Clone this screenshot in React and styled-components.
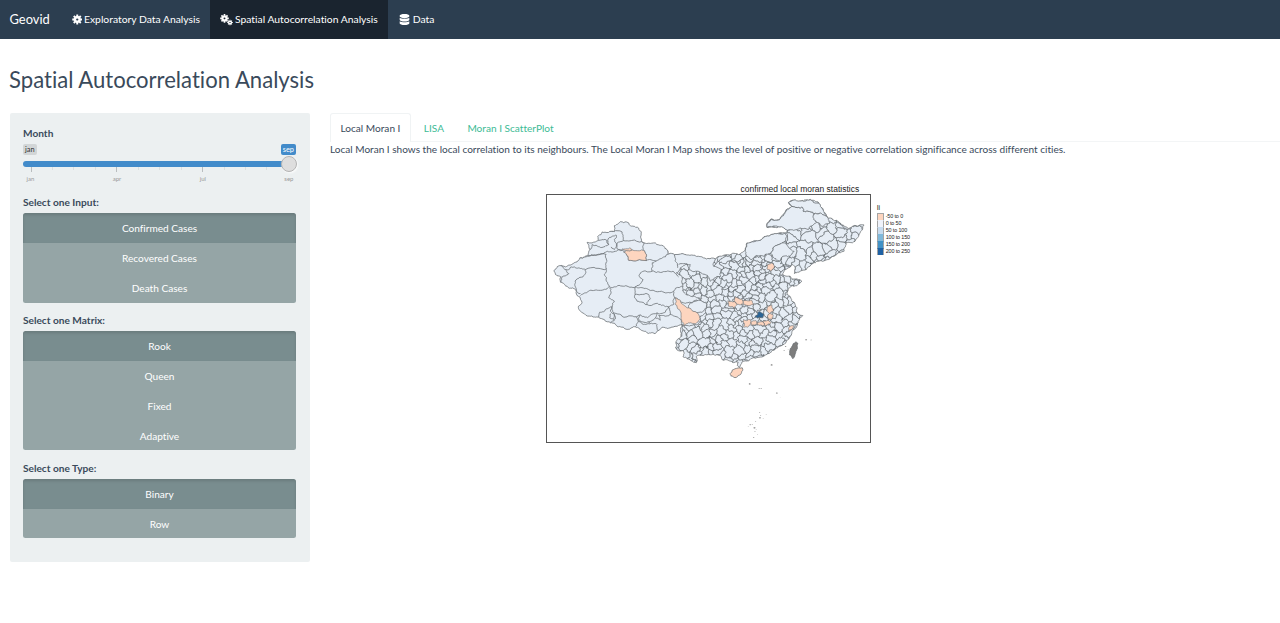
import React from "react";
import styled, { createGlobalStyle, css } from "styled-components";
import { FaDatabase } from "react-icons/fa";

const GlobalStyle = createGlobalStyle`
  * { box-sizing: border-box; }
  body {
    margin: 0;
    background: #fff;
    color: #3a4a5b;
    font-family: Lato, "Liberation Sans", sans-serif;
    font-size: 10px;
    font-variant-ligatures: none;
    line-height: 14.2px;
  }
`;

/* ---------- page chrome ---------- */

const Navbar = styled.nav`
  display: flex;
  height: 39px;
  padding-left: 9.5px;
  background: #2c3e50;
  color: #fff;
`;
const Brand = styled.div`
  width: 52px;
  font-size: 12.9px;
  line-height: 38px;
`;
const NavLink = styled.div`
  display: flex;
  align-items: center;
  gap: ${(p) => p.$gap || 2}px;
  padding: 0 ${(p) => p.$pad || 10}px;
  font-size: 10.35px;
  white-space: nowrap;
  background: ${(p) => (p.$active ? "#1a242f" : "transparent")};
`;
const Title = styled.h2`
  margin: 28px 0 0 9px;
  font-size: 22.1px;
  font-weight: 400;
  line-height: 26px;
  color: #3a4a5b;
`;
const Columns = styled.main`
  display: flex;
  align-items: flex-start;
  gap: 20px;
  padding: 20px 0 0 9.5px;
`;
const Sidebar = styled.aside`
  width: 300px;
  height: 449px;
  padding: 14px 13.5px;
  background: #ecf0f1;
  border-radius: 2px;
`;
const Label = styled.div`
  height: 17px;
  font-weight: 700;
  font-size: 10.15px;
  line-height: 13px;
`;

/* ---------- month slider ---------- */

const Slider = styled.div`
  height: 52px;
`;
const Flags = styled.div`
  display: flex;
  justify-content: space-between;
  height: 17px;
`;
const Flag = styled.span`
  height: 11px;
  padding: 0 2px;
  border-radius: 2px;
  font-size: 7.4px;
  line-height: 11px;
  color: ${(p) => (p.$current ? "#fff" : "#333")};
  background: ${(p) => (p.$current ? "#428bca" : "#d2d6d7")};
`;
const Track = styled.div`
  position: relative;
  height: 5.5px;
  border-radius: 3px;
  background: #428bca;
`;
const Handle = styled.div`
  position: absolute;
  right: -1px;
  top: -5px;
  width: 16px;
  height: 16px;
  border: 1px solid #b4b4b4;
  border-radius: 50%;
  background: #dedede;
  box-shadow: 1px 1px 2px rgba(255, 255, 255, 0.8);
`;
const Ticks = styled.div`
  display: flex;
  justify-content: space-between;
  margin: 0 7px 0 7.5px;
`;
const Tick = styled.div`
  width: 1px;
  height: ${(p) => (p.$major ? 5.5 : 3)}px;
  background: ${(p) => (p.$major ? "#b9bdbf" : "#dbdfe0")};
`;
const TickLabels = styled.div`
  display: flex;
  justify-content: space-between;
  margin: 3px 2.5px 0 3.5px;
  font-size: 6px;
  line-height: 8px;
  color: #999;
`;

/* ---------- button groups ---------- */

const Group = styled.div`
  margin-bottom: 11.2px;
  border-radius: 2.5px;
  overflow: hidden;
`;
const Choice = styled.div`
  height: 29.9px;
  color: #fff;
  text-align: center;
  font-size: 10.1px;
  line-height: 30px;
  background: #95a5a6;
  ${(p) =>
    p.$active &&
    css`
      background: #798d8f;
      box-shadow: inset 0 2px 3px rgba(0, 0, 0, 0.125);
    `}
`;

/* ---------- main panel ---------- */

const Panel = styled.section`
  flex: 1;
`;
const Tabs = styled.div`
  display: flex;
  height: 29px;
  border-bottom: 1px solid #f3f5f6;
`;
const Tab = styled.div`
  height: 29px;
  margin-right: 1.4px;
  padding: 0 10px;
  font-size: 10.1px;
  line-height: 28px;
  border: 1px solid ${(p) => (p.$active ? "#f0f3f4" : "transparent")};
  border-bottom: 0;
  border-radius: 3px 3px 0 0;
  background: ${(p) => (p.$active ? "#fff" : "transparent")};
  color: ${(p) => (p.$active ? "#3a4a5b" : "#3dbb95")};
`;
const Note = styled.p`
  margin: 0 0 0 0.5px;
  font-size: 10.06px;
  line-height: 15px;
`;
const Plot = styled.div`
  display: flex;
  gap: 6px;
  margin: 27px 0 0 216.2px;
  font-family: "Liberation Sans", Arial, sans-serif;
  color: #222;
`;
const PlotTitle = styled.div`
  height: 10.3px;
  padding-right: 11.5px;
  font-size: 8.5px;
  line-height: 11px;
  text-align: right;
`;
const Frame = styled.div`
  width: 325px;
  height: 249px;
  border: 1px solid #555;
`;
const Legend = styled.div`
  padding-top: 19.5px;
  font-size: 5.4px;
  letter-spacing: -0.12px;
  line-height: 7.6px;
`;
const LegendTitle = styled.div`
  height: 9.5px;
  font-size: 7px;
  line-height: 7px;
`;
const LegendRow = styled.div`
  display: flex;
  gap: 1.5px;
  height: 7px;
  white-space: nowrap;
`;
const Swatch = styled.span`
  width: 7.5px;
  border-left: 1px solid #a5a5a5;
  border-right: 1px solid #a5a5a5;
  border-top: 1px solid ${(p) => (p.$first ? "#a5a5a5" : "transparent")};
  background: ${(p) => p.$color};
`;

/* ---------- icons ---------- */

const Gear = ({ x, y, r }) => (
  <g transform={`translate(${x} ${y}) scale(${r / 5})`} stroke="currentColor">
    <circle r="2.4" fill="none" strokeWidth="2.6" />
    {[0, 45, 90, 135].map((a) => (
      <path key={a} d="M-5 0H-3M3 0H5" strokeWidth="1.9" transform={`rotate(${a})`} />
    ))}
  </g>
);
const CogIcon = () => (
  <svg width="10.5" height="11" viewBox="-5.25 -5.5 10.5 11"><Gear x={0} y={0} r={5} /></svg>
);
const CogsIcon = () => (
  <svg width="13" height="12" viewBox="0 0 13 12">
    <Gear x={4.5} y={4.4} r={4.3} />
    <Gear x={10} y={8.5} r={2.8} />
  </svg>
);

/* ---------- map geometry ---------- */

const LAND = "#e6edf5";
const PEACH = "#fdd5bf";
const LINE = "#666b70";

const OUTLINE = [
  [553.5,271.5],[558.7,266],[565,267.3],[575,262.7],[579.3,258.3],[587.3,255.7],[589.3,250],[586.7,242.7],[598.3,240.7],[597.3,236.7],[601.7,232.3],[614,232],[614,226],[620,222],[626,222.3],[630,226],[637.3,227.7],[641,233.3],[641,241.7],[655,243.3],[664,247.3],[668,254.5],[681.7,254],[693.3,255.7],[703.3,258.3],[715,259.3],[723.3,255.7],[738.3,255],[745,250.7],[746.7,243.3],[760,240.7],[765,236.7],[773.3,234.3],[785,233.3],[787.3,230.7],[778.3,227.3],[766.7,227.7],[766.7,224],[770.7,219.3],[779.3,220],[785,212.7],[791.7,206.7],[788.3,202.7],[795,200],[803.3,201.3],[811.7,200.7],[819.3,204],[823.3,210.7],[827.3,217.3],[836.7,220.7],[841.7,225],[850,228.3],[864,225.3],[860,233.3],[855,241.7],[846,242.7],[844,251.7],[835,256],[828.3,260],[816.7,261.7],[808.3,267.3],[800,271.7],[794.3,274],[795,267.3],[792.7,265],[785,270],[781.7,275],[790,276.7],[792,280],[801.7,281.7],[798,285],[792,286],[788,290],[786.7,295],[791.7,301.7],[796.7,308],[797,313],[802.7,316],[798,321.7],[796.7,326.7],[791.7,333],[788,340],[781.7,346],[775,350],[766.7,355],[758,358],[750,360],[741.7,362.7],[739.5,368],[737,366],[738,362.7],[730,361.7],[723,360.7],[720,356],[711.7,355],[703,356],[696,357],[696,363.3],[686.7,359.3],[682.7,357.3],[683.3,351.7],[675,348.3],[676,341.7],[680.7,335],[681.7,325],[670,328.3],[661.7,327.7],[655,334],[648,334],[640,330],[635,327.3],[626.7,330],[618,327.3],[610,323.3],[598,317.7],[590,316.7],[580,311.7],[578,306.7],[581.7,303.3],[579.3,297.3],[575,290],[568,288.3],[560,282.7],[560.7,277.3],[555,275],
];

// Survey sheets: thirds of a map unit, each measured from its own corner.
const sheet = (ox, oy) => (pts) => pts.map(([x, y]) => [ox + x / 3, oy + y / 3]);
const west = sheet(540, 190);
const north = sheet(740, 180);
const south = sheet(660, 270);

const WEST_AREA = west([[0,80],[260,60],[380,100],[384,192],[425,190],[480,193],[526,205],[520,230],[545,240],[540,262],[510,275],[495,255],[470,245],[445,240],[440,222],[420,235],[408,250],[425,260],[428,290],[432,310],[460,320],[480,335],[500,345],[497,370],[480,380],[475,403],[440,408],[425,405],[425,440],[0,440]]);

const WEST_LINES = [
  [[118,205],[142,200],[168,196],[197,194],[200,215],[198,238],[135,240],[115,235],[92,232],[75,240],[60,228]],
  [[135,240],[133,255],[110,268],[103,285],[108,303],[120,312]],
  [[75,240],[85,252],[65,262],[60,278]],
  [[198,238],[192,255],[198,275],[208,292],[185,302],[155,303],[135,310],[120,318]],
  [[148,180],[155,165],[190,172],[205,165],[202,152],[215,140],[228,137],[222,150],[228,170],[222,180],[212,172]],
  [[142,197],[175,196],[195,188],[225,185],[245,182],[258,193],[265,212],[318,213]],
  [[185,127],[245,127],[249,153],[303,156]],
  [[175,152],[200,153],[205,165]],
  [[249,153],[230,160],[230,178],[245,182]],
  [[303,156],[312,162],[308,182]],
  [[312,183],[318,213],[348,214],[375,202],[384,194]],
  [[348,214],[335,220],[335,245],[300,250],[296,258],[308,270],[300,283],[285,292],[250,290],[208,295]],
  [[335,245],[365,248],[398,245],[415,262]],
  [[402,196],[405,215],[412,235]],
  [[285,292],[300,294],[325,300],[375,310],[400,305],[428,290]],
  [[400,305],[403,325],[400,345],[385,352]],
  [[285,292],[284,315],[290,335],[320,345],[360,345],[385,352],[375,368],[350,370],[322,385],[300,376],[288,382],[260,382],[220,370],[215,352],[222,335],[205,325],[212,310],[208,295]],
  [[284,315],[325,315],[330,328],[320,345]],
  [[215,352],[210,365],[222,380],[220,390],[208,385],[212,372]],
  [[175,383],[178,368],[195,360],[215,352]],
  [[220,370],[225,388],[208,400]],
  [[288,382],[294,395],[285,412]],
  [[300,376],[295,392],[325,397],[345,385],[350,370]],
  [[325,397],[330,402],[350,405],[355,425]],
  [[294,395],[310,405],[330,402]],
  [[345,385],[360,392],[355,378],[375,380],[390,375],[385,352]],
  [[390,375],[415,385],[425,405]],
  [[403,325],[430,340],[460,335],[480,335]],
  [[445,240],[450,225],[415,225]],
].map(west);

const LARGE_AREAS = [
  north([[80,143],[80,132],[92,118],[118,120],[135,98],[155,80],[185,82],[190,95],[218,98],[222,120],[230,128],[210,140],[205,150],[180,145],[160,152],[142,152],[115,142]]),
  north([[145,68],[165,60],[190,64],[215,62],[238,72],[250,92],[262,108],[240,100],[222,102],[218,98],[190,95],[185,82],[155,80]]),
  north([[222,102],[240,100],[262,112],[270,130],[245,140],[230,128],[222,120]]),
  north([[15,212],[20,190],[60,182],[75,170],[100,163],[135,160],[138,182],[125,190],[98,205],[92,222],[70,230],[48,228],[35,240],[18,230]]),
  north([[98,205],[125,190],[140,195],[162,215],[150,230],[128,230],[120,245],[102,235],[92,222]]),
  south([[85,115],[90,100],[115,92],[138,98],[140,115],[125,128],[110,130]]),
];

const PEACH_AREAS = [
  west([[258,182],[275,181],[312,183],[318,213],[265,212],[258,193],[250,188]]),
  west([[245,178],[268,175],[275,181],[256,183]]),
  south([[45,85],[60,92],[72,108],[85,115],[98,125],[110,130],[118,150],[105,163],[85,160],[70,167],[62,148],[60,125],[45,105]]),
  south([[203,93],[222,96],[230,104],[223,116],[205,110]]),
  south([[222,96],[226,82],[245,88],[248,105],[230,104]]),
  south([[248,92],[276,94],[279,106],[250,107]]),
  south([[323,110],[335,106],[340,125],[328,132],[320,122]]),
  south([[328,132],[338,135],[334,150],[325,152],[322,140]]),
  south([[325,152],[333,160],[312,168],[308,156]]),
  south([[250,150],[270,150],[272,162],[262,173],[250,172]]),
  south([[272,158],[288,154],[290,166],[272,168]]),
  south([[290,160],[308,156],[312,168],[292,167]]),
  south([[388,172],[400,168],[396,180],[385,184]]),
  north([[83,255],[95,250],[103,262],[92,275],[80,268]]),
];
const HAINAN = south([[210,312],[216,302],[228,297],[246,295],[247,304],[238,317],[224,325],[212,320]]);
const WUHAN = south([[284,141],[292,136],[296,126],[304,130],[312,136],[308,145],[292,146]]);
const TAIWAN = south([[408,217],[413,221],[410,240],[404,258],[398,268],[388,256],[390,240],[400,222]]);
const ISLETS = [
  [806,340.3,1],[811,340.5,.6],[785.5,347,.8],[784,351,.7],[771.5,365.5,1],[749.5,384.5,.9],[759,389,.7],[761,389.3,.7],[776.7,393.7,.9],[780,398,.4],[759.5,413,.6],[759.8,418.5,.9],[766,415.5,.4],[750,425.5,.8],[752,425.3,.5],[754.3,428.5,1.1],[755.5,422,.5],[754.8,432,.6],[753.5,438.3,.8],[757.5,435,.4],[748,427,.4],[760.5,416,.5],[763,419.5,.4],[756,430.5,.4],[788,350,.4],
];

// Repeatable noise from a position, so shared borders bend the same way.
const noise = (x, y) => {
  const v = Math.sin(x * 12.9898 + y * 78.233) * 43758.5453;
  return v - Math.floor(v) - 0.5;
};

const bend = (a, b, depth, amount) => {
  const len = Math.hypot(b[0] - a[0], b[1] - a[1]);
  if (depth === 0 || len < 1.6) return [b];
  const mx = (a[0] + b[0]) / 2;
  const my = (a[1] + b[1]) / 2;
  const kx = Math.round(mx * 50);
  const ky = Math.round(my * 50);
  const k = Math.min(len, 7) * amount;
  const m = [mx + noise(kx, ky) * k, my + noise(ky, kx) * k];
  return [...bend(a, m, depth - 1, amount), ...bend(m, b, depth - 1, amount)];
};

const trace = (pts, closed = true, amount = 0.34) => {
  const out = [pts[0]];
  const n = closed ? pts.length : pts.length - 1;
  for (let i = 0; i < n; i++) out.push(...bend(pts[i], pts[(i + 1) % pts.length], 3, amount));
  return "M" + out.map((p) => p[0].toFixed(1) + " " + p[1].toFixed(1)).join("L") + (closed ? "Z" : "");
};

const spacing = (x, y) => {
  if (y < 262 && x > 775) return 7.2;
  if (x < 735 && y < 275) return 6.4;
  if (x < 715) return 5.8;
  if (y > 318) return 5.4;
  return 5;
};

// Moves a shared corner off its regular position, the same way for each cell that meets there.
const shift = ([x, y]) => {
  const kx = Math.round(x * 20);
  const ky = Math.round(y * 20);
  return [x + noise(kx, ky) * 2.6, y + noise(ky, kx) * 2.6];
};

const makeCells = () => {
  let seed = 4711;
  const rand = () => {
    seed = (seed * 16807) % 2147483647;
    return seed / 2147483647;
  };
  const sites = [];
  for (let i = 0; i < 2100; i++) {
    const x = 665 + rand() * 205;
    const y = 195 + rand() * 180;
    const r = spacing(x, y);
    if (rand() > (5 / r) ** 2) continue;
    if (sites.every((s) => Math.hypot(s[0] - x, (s[1] - y) * 1.15) > r * 0.78)) sites.push([x, y]);
  }
  return sites.map((s) => {
    let poly = [[s[0] - 14, s[1] - 14],[s[0] + 14, s[1] - 14],[s[0] + 14, s[1] + 14],[s[0] - 14, s[1] + 14]];
    for (const t of sites) {
      const dx = t[0] - s[0];
      const dy = t[1] - s[1];
      if ((dx === 0 && dy === 0) || Math.hypot(dx, dy) > 40) continue;
      const c = (t[0] * t[0] + t[1] * t[1] - s[0] * s[0] - s[1] * s[1]) / 2;
      const side = (p) => p[0] * dx + p[1] * dy - c;
      const next = [];
      poly.forEach((p, i) => {
        const q = poly[(i + 1) % poly.length];
        const a = side(p);
        const b = side(q);
        if (a <= 0) next.push(p);
        if (a * b < 0) {
          const k = a / (a - b);
          next.push([p[0] + (q[0] - p[0]) * k, p[1] + (q[1] - p[1]) * k]);
        }
      });
      poly = next;
    }
    return poly.map(shift);
  });
};

const coast = trace(OUTLINE);
const cells = makeCells().map((c) => trace(c, true, 0.6)).join("");

const MapSvg = styled.svg`
  display: block;
  width: 100%;
  height: 100%;
`;

const ChinaMap = () => (
  <MapSvg viewBox="546.5 195.5 323.5 247" stroke={LINE} strokeWidth="0.75" strokeLinejoin="round" fill={LAND}>
    <clipPath id="coast"><path d={coast} /></clipPath>
    <g clipPath="url(#coast)">
      <path d={coast} stroke="none" />
      <path d={cells} fill="none" strokeWidth="0.5" />
      <path d={trace(WEST_AREA)} />
      {WEST_LINES.map((l, i) => <path key={i} d={trace(l, false)} fill="none" />)}
      {LARGE_AREAS.map((a, i) => <path key={i} d={trace(a)} />)}
      {PEACH_AREAS.map((a, i) => <path key={i} d={trace(a)} fill={PEACH} strokeWidth="0.6" />)}
      <path d={trace(WUHAN)} fill="#2a6496" />
    </g>
    <path d={coast} fill="none" />
    <path d={trace(HAINAN)} fill={PEACH} />
    <path d={trace(TAIWAN)} fill="#7d7d7d" />
    {ISLETS.map(([x, y, r], i) => <ellipse key={i} cx={x} cy={y} rx={r} ry={r * 0.6} fill="#777" stroke="none" />)}
  </MapSvg>
);

const LEGEND = [
  [PEACH, "-50 to 0"],
  ["#eff3fb", "0 to 50"],
  ["#c6dbef", "50 to 100"],
  ["#7fb8da", "100 to 150"],
  ["#4292c6", "150 to 200"],
  ["#1f62a5", "200 to 250"],
];

const GROUPS = [
  ["Select one Input:", ["Confirmed Cases", "Recovered Cases", "Death Cases"]],
  ["Select one Matrix:", ["Rook", "Queen", "Fixed", "Adaptive"]],
  ["Select one Type:", ["Binary", "Row"]],
];

export default function App() {
  return (
    <>
      <GlobalStyle />
      <Navbar>
        <Brand>Geovid</Brand>
        <NavLink><CogIcon />Exploratory Data Analysis</NavLink>
        <NavLink $active><CogsIcon />Spatial Autocorrelation Analysis</NavLink>
        <NavLink $gap={3} $pad={11}><FaDatabase size={11} />Data</NavLink>
      </Navbar>
      <Title>Spatial Autocorrelation Analysis</Title>
      <Columns>
        <Sidebar>
          <Label>Month</Label>
          <Slider>
            <Flags><Flag>jan</Flag><Flag $current>sep</Flag></Flags>
            <Track><Handle /></Track>
            <Ticks>
              {Array.from({ length: 13 }, (_, i) => <Tick key={i} $major={i % 4 === 0} />)}
            </Ticks>
            <TickLabels><span>jan</span><span>apr</span><span>jul</span><span>sep</span></TickLabels>
          </Slider>
          {GROUPS.map(([label, choices]) => (
            <div key={label}>
              <Label>{label}</Label>
              <Group>
                {choices.map((c, i) => <Choice key={c} $active={i === 0}>{c}</Choice>)}
              </Group>
            </div>
          ))}
        </Sidebar>
        <Panel>
          <Tabs>
            <Tab $active>Local Moran I</Tab>
            <Tab>LISA</Tab>
            <Tab>Moran I ScatterPlot</Tab>
          </Tabs>
          <Note>
            Local Moran I shows the local correlation to its neighbours. The Local Moran I Map shows the level of
            positive or negative correlation significance across different cities.
          </Note>
          <Plot>
            <div>
              <PlotTitle>confirmed local moran statistics</PlotTitle>
              <Frame><ChinaMap /></Frame>
            </div>
            <Legend>
              <LegendTitle>Ii</LegendTitle>
              {LEGEND.map(([color, text], i) => (
                <LegendRow key={text}><Swatch $color={color} $first={i === 0} />{text}</LegendRow>
              ))}
            </Legend>
          </Plot>
        </Panel>
      </Columns>
    </>
  );
}
